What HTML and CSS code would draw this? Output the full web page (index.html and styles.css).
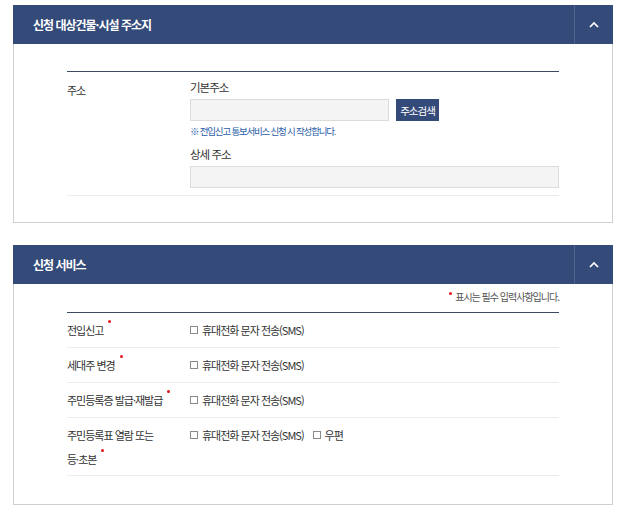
FILE: index.html
```html
<!DOCTYPE html>
<html lang="ko">
<head>
<meta charset="utf-8">
<title>신청</title>
<link rel="stylesheet" href="styles.css">
</head>
<body>
<section class="panel">
  <header class="panel-head">
    <h2 class="panel-title">신청 대상건물·시설 주소지</h2>
    <button class="toggle" type="button" aria-label="접기">
      <svg width="10" height="7" viewBox="0 0 10 7"><polyline points="1,6 5,2 9,6" fill="none" stroke="#fff" stroke-width="1.7"/></svg>
    </button>
  </header>
  <div class="panel-body panel-body-addr">
    <div class="table">
      <div class="row row-addr">
        <div class="label label-addr">주소</div>
        <div class="field">
          <div class="sub-label">기본주소</div>
          <div class="addr-line">
            <input class="input input-short" type="text">
            <button class="btn" type="button">주소검색</button>
          </div>
          <p class="note">※ 전입신고 통보서비스 신청 시 작성합니다.</p>
          <div class="sub-label sub-label-gap">상세 주소</div>
          <input class="input input-full" type="text">
        </div>
      </div>
    </div>
  </div>
</section>

<section class="panel panel-second">
  <header class="panel-head">
    <h2 class="panel-title">신청 서비스</h2>
    <button class="toggle" type="button" aria-label="접기">
      <svg width="10" height="7" viewBox="0 0 10 7"><polyline points="1,6 5,2 9,6" fill="none" stroke="#fff" stroke-width="1.7"/></svg>
    </button>
  </header>
  <div class="panel-body panel-body-svc">
    <p class="req-note"><span class="dot dot-note"></span>표시는 필수 입력사항입니다.</p>
    <div class="table">
      <div class="row">
        <div class="label">전입신고<span class="dot"></span></div>
        <div class="field checks">
          <label class="check"><span class="box"></span>휴대전화 문자 전송(SMS)</label>
        </div>
      </div>
      <div class="row">
        <div class="label">세대주 변경<span class="dot"></span></div>
        <div class="field checks">
          <label class="check"><span class="box"></span>휴대전화 문자 전송(SMS)</label>
        </div>
      </div>
      <div class="row">
        <div class="label">주민등록증 발급·재발급<span class="dot"></span></div>
        <div class="field checks">
          <label class="check"><span class="box"></span>휴대전화 문자 전송(SMS)</label>
        </div>
      </div>
      <div class="row row-last">
        <div class="label label-narrow">주민등록표 열람 또는 <span class="word">등·초본<span class="dot"></span></span></div>
        <div class="field checks">
          <label class="check"><span class="box"></span>휴대전화 문자 전송(SMS)</label>
          <label class="check"><span class="box"></span>우편</label>
        </div>
      </div>
    </div>
  </div>
</section>
</body>
</html>
```

FILE: styles.css
```css
* {
  box-sizing: border-box;
}

body {
  margin: 0;
  padding: 5px 0 0 13px;
  background: #fff;
  font-family: "Noto Sans CJK KR", "Noto Sans", sans-serif;
  color: #333;
  font-size: 11px;
  letter-spacing: -1px;
  word-break: keep-all;
}

.panel {
  width: 600px;
  border: 1px solid #cfcfcf;
  border-top: 0;
}

.panel-second {
  margin-top: 22px;
}

.panel-head {
  display: flex;
  align-items: stretch;
  height: 39px;
  margin: 0 -1px;
  background: #344b7a;
  color: #fff;
}

.panel-title {
  flex: 1;
  margin: 0;
  padding-left: 20px;
  font-size: 12px;
  font-weight: 700;
  line-height: 39px;
  letter-spacing: -1px;
}

.toggle {
  width: 39px;
  padding: 0;
  border: 0;
  border-left: 1px solid rgba(255, 255, 255, 0.13);
  background: transparent;
  display: flex;
  align-items: center;
  justify-content: center;
}

.panel-body {
  padding: 0 53px 26px;
}

.panel-body-addr {
  padding-top: 27px;
}

.panel-body-svc {
  padding-top: 4px;
  padding-bottom: 28px;
}

.table {
  border-top: 1px solid #3c4a60;
}

.row {
  display: flex;
  padding: 5px 0;
  border-bottom: 1px solid #ececec;
  line-height: 24px;
}

.row-addr {
  padding: 6px 0 7px;
}

.row-last {
  padding-bottom: 4px;
}

.label {
  width: 123px;
  flex-shrink: 0;
  padding-right: 6px;
  color: #333;
}

.label-narrow {
  padding-right: 14px;
}

.word {
  white-space: nowrap;
}

.label-addr {
  padding-top: 3px;
  line-height: 18px;
}

.field {
  flex: 1;
}

.sub-label {
  font-size: 11.5px;
  line-height: 18px;
  color: #333;
}

.sub-label-gap {
  margin-top: 5px;
}

.addr-line {
  display: flex;
  gap: 7px;
  margin-top: 3px;
}

.input {
  display: block;
  height: 22px;
  border: 1px solid #dcdcdc;
  background: #f4f4f4;
  margin: 0;
  padding: 0 6px;
}

.input-short {
  width: 199px;
}

.input-full {
  width: 100%;
  margin-top: 3px;
}

.btn {
  height: 22px;
  width: 43px;
  padding: 0;
  border: 0;
  background: #344b7a;
  color: #fff;
  font-family: inherit;
  font-size: 10.5px;
  letter-spacing: -1px;
}

.note {
  margin: 1px 0 0;
  font-size: 9.5px;
  line-height: 18px;
  letter-spacing: -1.2px;
  color: #2a5ea8;
}

.req-note {
  margin: 0 0 6px;
  text-align: right;
  font-size: 10px;
  line-height: 18px;
  letter-spacing: -1px;
  color: #555;
}

.dot {
  display: inline-block;
  width: 3px;
  height: 3px;
  border-radius: 50%;
  background: #e0141e;
  margin-left: 5px;
  vertical-align: 12px;
}

.dot-note {
  margin: 0 3px 0 0;
  vertical-align: 6px;
}

.checks {
  display: flex;
  align-items: flex-start;
  gap: 9px;
}

.check {
  display: inline-flex;
  align-items: center;
  color: #333;
}

.box {
  width: 8px;
  height: 8px;
  border: 1px solid #8a8a8a;
  background: #fff;
  margin-right: 4px;
}
```
